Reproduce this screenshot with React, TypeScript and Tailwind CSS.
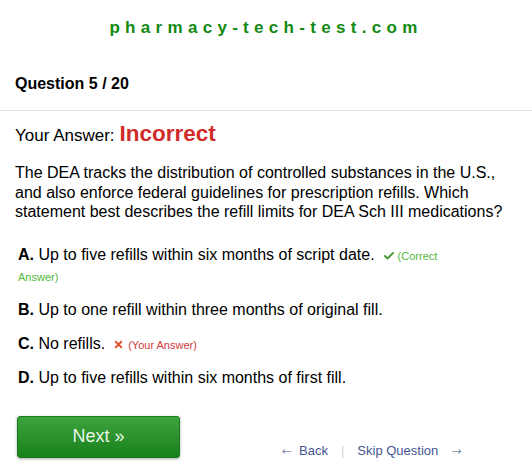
import { Check, X } from "lucide-react";

const options = [
  { key: "A", text: "Up to five refills within six months of script date.", mark: "correct" },
  { key: "B", text: "Up to one refill within three months of original fill.", mark: "" },
  { key: "C", text: "No refills.", mark: "yours" },
  { key: "D", text: "Up to five refills within six months of first fill.", mark: "" },
];

export default function App() {
  return (
    <div className="w-[532px] h-[466px] bg-white text-black font-['Liberation_Sans',Arial,sans-serif] overflow-hidden">
      <div className="pt-[15px] text-center">
        <span className="text-[17px] font-bold tracking-[5.3px] text-[#138a13]">pharmacy-tech-test.com</span>
      </div>

      <div className="px-[15px] pt-[34px] pb-[17px] border-b border-[#e3e3e3]">
        <h2 className="text-[16px] font-bold leading-[18px]">Question 5 / 20</h2>
      </div>

      <div className="px-[15px] pt-[6px]">
        <div className="flex items-baseline gap-[5px]">
          <span className="text-[17px]">Your Answer:</span>
          <span className="text-[22.5px] font-bold text-[#d02b2b]">Incorrect</span>
        </div>

        <p className="mt-[13px] text-[16px] leading-[19.5px]">
          The DEA tracks the distribution of controlled substances in the U.S., and also enforce federal
          guidelines for prescription refills. Which statement best describes the refill limits for DEA Sch III
          medications?
        </p>

        <ul className="mt-[22px] pl-[3px] pr-[60px] flex flex-col gap-[13px]">
          {options.map((o) => (
            <li key={o.key} className="text-[16px] leading-[21px]">
              <b>{o.key}.</b> {o.text}
              {o.mark === "correct" && (
                <span className="text-[11px] leading-none text-[#52b83a] ml-[8px]">
                  <Check className="inline w-[12px] h-[12px] text-[#4a9a3a] mr-[3px] -mt-[2px]" strokeWidth={4} />
                  (Correct Answer)
                </span>
              )}
              {o.mark === "yours" && (
                <span className="text-[11px] leading-none text-[#d03a3a] ml-[8px]">
                  <X className="inline w-[11px] h-[11px] text-[#e0502a] mr-[4px] -mt-[2px]" strokeWidth={4} />
                  (Your Answer)
                </span>
              )}
            </li>
          ))}
        </ul>

        <div className="mt-[28px] pl-[2px] flex items-end">
          <button className="w-[163px] h-[42px] rounded-[3px] bg-gradient-to-b from-[#3ea43e] to-[#15801a] border border-[#1b7a1b] shadow-[0_1px_3px_rgba(0,0,0,0.35)] text-[18px] text-[#eaf7e6]">
            Next »
          </button>
          <div className="ml-[102px] -mb-[3px] flex items-center text-[13px] text-[#44558f]">
            <span className="font-['DejaVu_Sans',sans-serif] text-[12px] font-light">←</span>
            <span className="ml-[7px]">Back</span>
            <span className="mx-[13px] text-[#d4d4d4]">|</span>
            <span>Skip Question</span>
            <span className="ml-[13px] font-['DejaVu_Sans',sans-serif] text-[12px] font-light">→</span>
          </div>
        </div>
      </div>
    </div>
  );
}
